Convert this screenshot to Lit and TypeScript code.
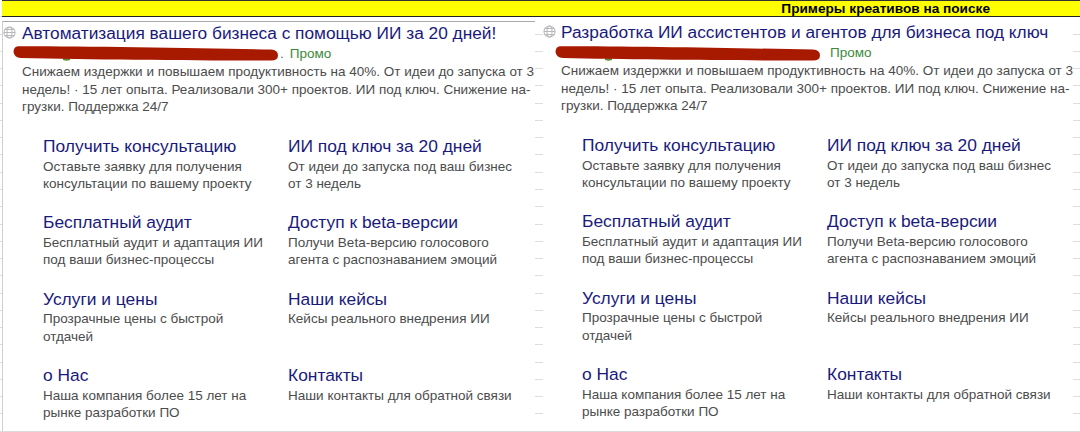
import { LitElement, html, css, svg } from "lit";
import { customElement } from "lit/decorators.js";

const links = [
  ["Получить консультацию", "Оставьте заявку для получения консультации по вашему проекту"],
  ["ИИ под ключ за 20 дней", "От идеи до запуска под ваш бизнес от 3 недель"],
  ["Бесплатный аудит", "Бесплатный аудит и адаптация ИИ под ваши бизнес-процессы"],
  ["Доступ к beta-версии", "Получи Beta-версию голосового агента с распознаванием эмоций"],
  ["Услуги и цены", "Прозрачные цены с быстрой отдачей"],
  ["Наши кейсы", "Кейсы реального внедрения ИИ"],
  ["о Нас", "Наша компания более 15 лет на рынке разработки ПО"],
  ["Контакты", "Наши контакты для обратной связи"],
];

const globe = svg`<svg class="globe" width="13" height="13" viewBox="0 0 14 14" fill="none" stroke="#b9b9bd" stroke-width="1.1"><circle cx="7" cy="7" r="6"/><ellipse cx="7" cy="7" rx="2.7" ry="6"/><path d="M1 7h12M2 3.8h10M2 10.2h10"/></svg>`;

const scribble = svg`<svg class="scribble" width="270" height="18" viewBox="0 0 270 18"><path d="M50 10h7v4q-3.5 1.6-7 0z" fill="#5d8f3a"/><path d="M5 0.3 C70 0.2 190 2.2 258 3.6 Q265 4.2 265 9.2 Q265 14.5 258 14.5 C180 14.6 80 13.6 8 12 Q1 11.4 0.5 6 Q0.5 0.8 5 0.3Z" fill="#a81a00"/></svg>`;

@customElement("app-root")
export class AppRoot extends LitElement {
  static styles = css`
    :host {
      display: block; width: 1080px; height: 432px; overflow: hidden; box-sizing: border-box;
      font-family: "Liberation Sans", Arial, sans-serif;
      border-bottom: 1px solid #dcdcdc;
      --dash: repeating-linear-gradient(to bottom, transparent 0, transparent 16.27px, #dedede 16.27px, #dedede 17.27px);
      background-color: #fff;
      background-image: var(--dash), var(--dash), var(--dash);
      background-size: 2px 100%, 8px 100%, 7px 100%;
      background-position: 0 0, 535px 0, 1073px 0;
      background-repeat: no-repeat;
    }
    .bar {
      height: 15px; margin-left: 2px; background: #ffff00;
      border-top: 1px solid #333; border-bottom: 1px solid #222;
      display: flex; justify-content: flex-end; align-items: center; padding-right: 90px;
      font-size: 13.65px; font-weight: 700; color: #000;
    }
    .panels { display: grid; grid-template-columns: 535px 545px; }
    .ad { display: grid; min-width: 0; }
    .ad.left {
      grid-template-columns: 19px 1fr; margin: 4px 0 0 2px;
      border-top: 1px solid #a8a8a8; border-left: 1px solid #d0d0d0;
    }
    .ad.right { grid-template-columns: 18px 1fr; padding: 4px 0 0 8px; }
    .gutter { padding-top: 4px; }
    .globe { display: block; }
    .main { position: relative; min-width: 0; }
    .title { font-size: 17.3px; line-height: 22px; color: #1a1a7c; white-space: nowrap; }
    .meta { display: flex; height: 19px; line-height: 19px; font-size: 13.5px; color: #3c8a3c; }
    .left .meta { padding-left: 258px; gap: 6px; }
    .right .meta { padding-left: 269px; }
    .dot { color: #666; }
    .desc { font-size: 13.5px; line-height: 17.5px; color: #4c4c4c; white-space: nowrap; }
    .scribble { position: absolute; left: -9px; top: 24px; }
    .right .scribble { left: -6px; top: 25px; }
    .links { display: grid; grid-template-columns: 245px 245px; grid-auto-rows: 76.4px; padding: 19.5px 0 0 21px; }
    .link-title { font-size: 17.4px; line-height: 22px; color: #1a1a7c; white-space: nowrap; }
    .link-desc { font-size: 13.5px; line-height: 17.5px; color: #4c4c4c; width: 225px; margin-top: 0.5px; }
  `;

  ad(side: string, title: string) {
    return html`<div class="ad ${side}">
      <div class="gutter">${globe}</div>
      <div class="main">
        <div class="title">${title}</div>
        <div class="meta">${side === "left" ? html`<span class="dot">.</span>` : ""}<span>Промо</span></div>
        <div class="desc">Снижаем издержки и повышаем продуктивность на 40%. От идеи до запуска от 3<br />недель! · 15 лет опыта. Реализовали 300+ проектов. ИИ под ключ. Снижение на-<br />грузки. Поддержка 24/7</div>
        ${scribble}
        <div class="links">
          ${links.map(([t, d]) => html`<div><div class="link-title">${t}</div><div class="link-desc">${d}</div></div>`)}
        </div>
      </div>
    </div>`;
  }

  render() {
    return html`
      <div class="bar">Примеры креативов на поиске</div>
      <div class="panels">
        ${this.ad("left", "Автоматизация вашего бизнеса с помощью ИИ за 20 дней!")}
        ${this.ad("right", "Разработка ИИ ассистентов и агентов для бизнеса под ключ")}
      </div>
    `;
  }
}
